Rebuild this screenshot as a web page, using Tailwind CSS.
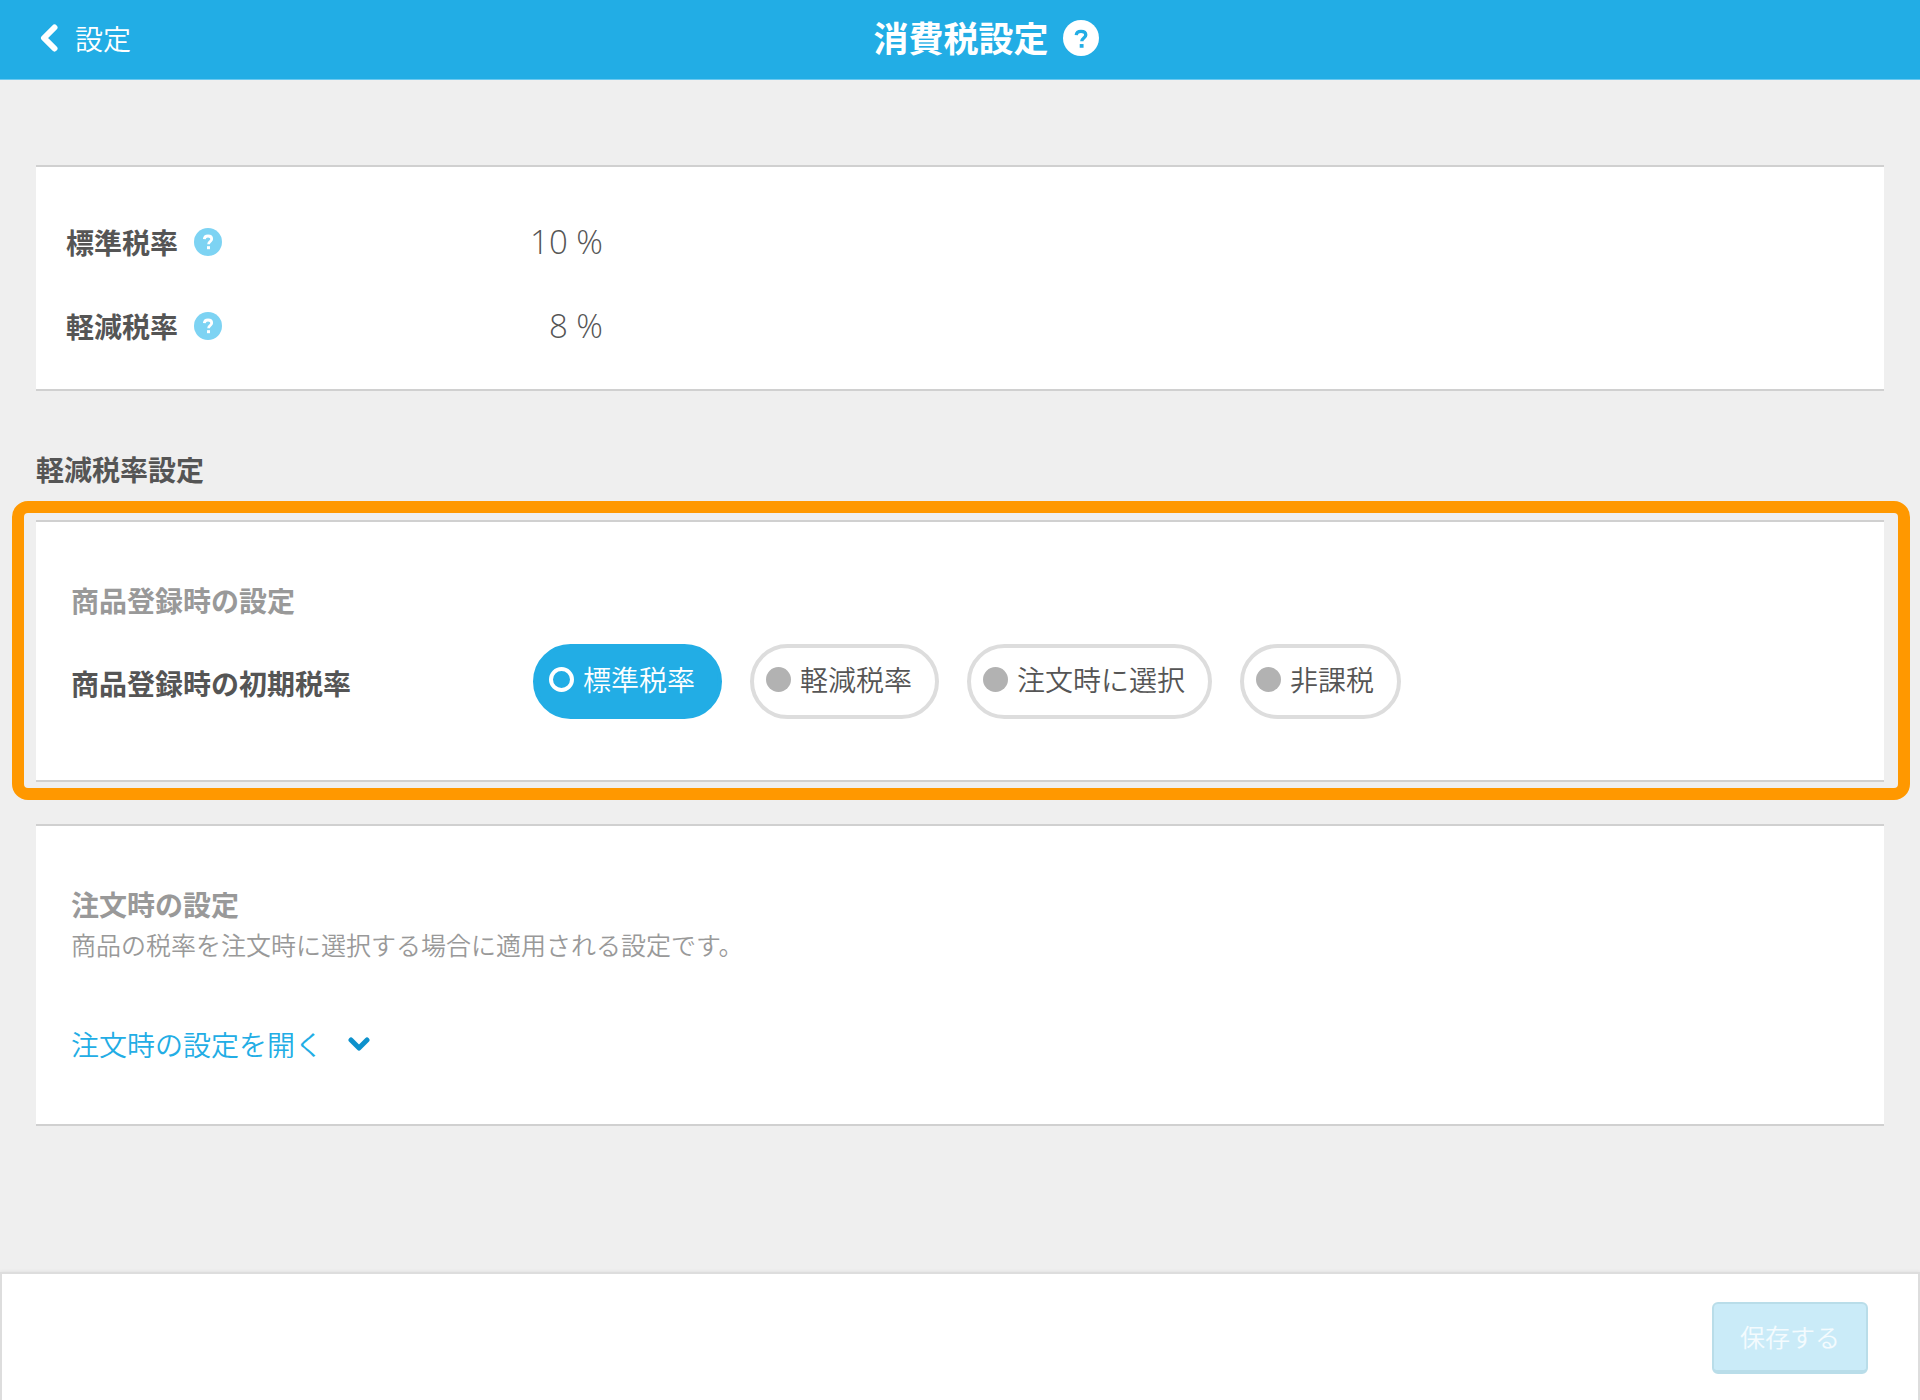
<!DOCTYPE html>
<html lang="ja">
<head>
<meta charset="utf-8">
<meta name="viewport" content="width=device-width, initial-scale=1">
<title>消費税設定</title>
<script src="https://cdn.jsdelivr.net/npm/@tailwindcss/browser@4"></script>
</head>
<body class="flex min-h-screen flex-col bg-[#efefef] font-['Noto_Sans_CJK_JP',sans-serif] text-[28px] leading-[40px] font-[350] text-[#555]">

<header class="grid h-20 grid-cols-[1fr_auto_1fr] items-center border-b border-[#6cc9f0] bg-[#22ade5] px-10 pb-1 text-white">
  <a href="#" class="flex items-center gap-[17px]">
    <svg class="h-[30px] w-[18px]" viewBox="0 0 18 30" fill="none" stroke="currentColor" stroke-width="6" stroke-linecap="round" stroke-linejoin="round" aria-hidden="true"><path d="M14.500 4.500 4 15 14.500 25.500"/></svg>
    <span>設定</span>
  </a>
  <div class="flex items-center gap-[14px] pl-[52px]">
    <h1 class="pb-[2px] text-[35px] leading-[50px] font-bold">消費税設定</h1>
    <button type="button" aria-label="消費税設定のヘルプ">
      <svg class="size-9" viewBox="0 0 28 28" aria-hidden="true"><circle cx="14" cy="14" r="14" fill="#fff"/><path d="M10.300 11.800c.2-2 1.600-3 3.700-3 2.200 0 3.700 1.100 3.700 2.800 0 2.400-3.100 2.400-3.100 5" fill="none" stroke="#22ade5" stroke-width="2.600"/><rect x="13" y="18.700" width="3" height="2.900" fill="#22ade5"/></svg>
    </button>
  </div>
</header>

<main class="flex-1 pt-[85px] pb-12">
  <section class="mx-9 border-y-2 border-[#d0d0d0] bg-white px-[30px] pt-[55px] pb-[43px]">
    <dl class="grid w-[537px] gap-[44px]">
      <div class="flex items-center justify-between">
        <dt class="flex items-center gap-4 font-bold">標準税率
          <button type="button" aria-label="標準税率のヘルプ">
            <svg class="size-7" viewBox="0 0 28 28" aria-hidden="true"><circle cx="14" cy="14" r="14" fill="#7dd3f3"/><path d="M10.300 11.200c.2-2 1.600-3.200 3.700-3.200 2.200 0 3.700 1.200 3.700 3 0 2.500-3.100 2.500-3.100 5.200" fill="none" stroke="#fff" stroke-width="2.800"/><rect x="13" y="18.200" width="3" height="3" fill="#fff"/></svg>
          </button>
        </dt>
        <dd class="font-['Open_Sans',sans-serif] text-[33px] font-[350]">10 %</dd>
      </div>
      <div class="flex items-center justify-between">
        <dt class="flex items-center gap-4 font-bold">軽減税率
          <button type="button" aria-label="軽減税率のヘルプ">
            <svg class="size-7" viewBox="0 0 28 28" aria-hidden="true"><circle cx="14" cy="14" r="14" fill="#7dd3f3"/><path d="M10.300 11.200c.2-2 1.600-3.200 3.700-3.200 2.200 0 3.700 1.200 3.700 3 0 2.500-3.100 2.500-3.100 5.200" fill="none" stroke="#fff" stroke-width="2.800"/><rect x="13" y="18.200" width="3" height="3" fill="#fff"/></svg>
          </button>
        </dt>
        <dd class="font-['Open_Sans',sans-serif] text-[33px] font-[350]">8 %</dd>
      </div>
    </dl>
  </section>

  <h2 class="mx-9 mt-[58px] font-bold">軽減税率設定</h2>

  <div class="mt-3 mr-[10px] ml-3 rounded-2xl border-12 border-[#ff9800] pt-[7px] pr-[14px] pb-[6px] pl-3">
    <section class="border-y-2 border-[#d0d0d0] bg-white px-[35px] pt-[58px] pb-[61px]">
      <h3 class="font-bold text-[#999]">商品登録時の設定</h3>
      <div class="mt-6 flex items-center" role="radiogroup" aria-labelledby="default-rate">
        <span id="default-rate" class="w-[462px] pt-[2px] font-bold">商品登録時の初期税率</span>
        <div class="flex gap-7">
          <label class="flex h-[75px] items-center gap-[9px] rounded-full border-4 border-[#ddd] pr-[23px] pb-[5px] pl-3 has-checked:border-[#22ade5] has-checked:bg-[#22ade5] has-checked:text-white">
            <input type="radio" name="rate" checked class="size-[25px] appearance-none rounded-full bg-[#b2b2b2] checked:border-4 checked:border-white checked:bg-transparent">標準税率
          </label>
          <label class="flex h-[75px] items-center gap-[9px] rounded-full border-4 border-[#ddd] pr-[23px] pb-[5px] pl-3 has-checked:border-[#22ade5] has-checked:bg-[#22ade5] has-checked:text-white">
            <input type="radio" name="rate" class="size-[25px] appearance-none rounded-full bg-[#b2b2b2] checked:border-4 checked:border-white checked:bg-transparent">軽減税率
          </label>
          <label class="flex h-[75px] items-center gap-[9px] rounded-full border-4 border-[#ddd] pr-[23px] pb-[5px] pl-3 has-checked:border-[#22ade5] has-checked:bg-[#22ade5] has-checked:text-white">
            <input type="radio" name="rate" class="size-[25px] appearance-none rounded-full bg-[#b2b2b2] checked:border-4 checked:border-white checked:bg-transparent">注文時に選択
          </label>
          <label class="flex h-[75px] items-center gap-[9px] rounded-full border-4 border-[#ddd] pr-[23px] pb-[5px] pl-3 has-checked:border-[#22ade5] has-checked:bg-[#22ade5] has-checked:text-white">
            <input type="radio" name="rate" class="size-[25px] appearance-none rounded-full bg-[#b2b2b2] checked:border-4 checked:border-white checked:bg-transparent">非課税
          </label>
        </div>
      </div>
    </section>
  </div>

  <section class="mx-9 mt-6 border-y-2 border-[#d0d0d0] bg-white px-[35px] pt-[58px] pb-[60px]">
    <h3 class="font-bold text-[#999]">注文時の設定</h3>
    <p class="text-[25px] text-[#999]">商品の税率を注文時に選択する場合に適用される設定です。</p>
    <button type="button" class="mt-[60px] flex items-center gap-[25px] text-[#22ade5]">注文時の設定を開く
      <svg class="h-4 w-[22px]" viewBox="0 0 22 16" fill="none" stroke="#0d91cc" stroke-width="5" stroke-linecap="round" stroke-linejoin="round" aria-hidden="true"><path d="M3 4 11 12 19 4"/></svg>
    </button>
  </section>
</main>

<footer class="flex h-32 items-start justify-end border-x-2 border-t-2 border-[#ddd] bg-white pt-7 pr-[50px] shadow-[0_-1px_3px_#0000000d]">
  <button type="submit" disabled class="h-[72px] w-[156px] rounded-md border-2 border-b-4 border-[#b9dde9] bg-[#caebf8] pb-[2px] text-[25px] text-white/80">保存する</button>
</footer>

</body>
</html>
